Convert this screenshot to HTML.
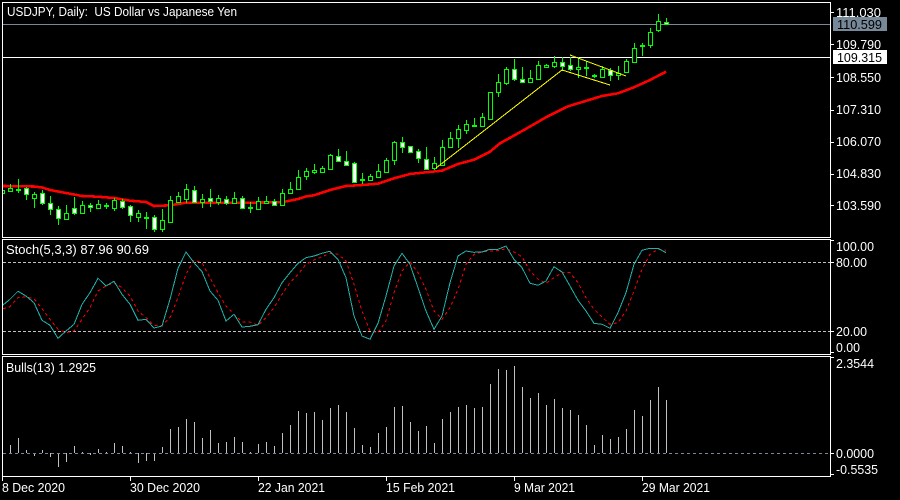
<!DOCTYPE html>
<html><head><meta charset="utf-8"><style>
html,body{margin:0;padding:0;background:#000;width:900px;height:500px;overflow:hidden}
svg{display:block}
text{font-family:"Liberation Sans",sans-serif;font-size:13px;fill:#fff}
.c{shape-rendering:crispEdges}
</style></head><body>
<svg width="900" height="500" viewBox="0 0 900 500" xmlns="http://www.w3.org/2000/svg">
<rect width="900" height="500" fill="#000"/>
<!-- horizontal price lines -->
<g class="c" fill="none" stroke-width="1">
<path d="M3 24.500H830" stroke="#778899"/>
<path d="M3 57.500H830" stroke="#fff"/>
</g>
<!-- MA -->
<polyline class="c" fill="none" stroke="#f00" stroke-width="2.6" points="3,186 34,186.500 42,187.500 50,190 66,193 82,196 98,196.700 114,198 130,200.700 146,202 154,206 170,205.300 186,202.700 242,202.700 282,202.300 298,199 306,196.500 314,195.300 330,190 346,186 362,185 378,183.700 394,178.300 410,174 426,172.300 442,170.700 458,164 474,159.700 490,151.700 500,143.300 524,130 547,116.700 567,106.700 578,103.300 602,96 618,93.300 634,87.300 650,80 666,71.700"/>
<!-- wicks -->
<path class="c" fill="none" stroke="#0f0" d="M10.500 184V192M18.500 179V193M26.500 187V200M34.500 192V208M42.500 190V205M50.500 196V215M58.500 206V225M66.500 205V220M74.500 197V215M82.500 201V213M90.500 203V212M98.500 200V208M106.500 203V209M114.500 198V211M122.500 199V209M130.500 205V222M138.500 210V222M146.500 212V229M154.500 215V232M162.500 209V232M170.500 196V223M178.500 192V203M186.500 184V203M194.500 186V203M202.500 194V208M210.500 189V207M218.500 195V205M226.500 196V205M234.500 192V204M242.500 196V209M250.500 202V213M258.500 197V209M266.500 196V203M274.500 199V206M282.500 189V206M290.500 182V193M298.500 170V190M306.500 168V180M314.500 164V174M322.500 166V172M330.500 154V170M338.500 149V161M346.500 151V165M354.500 162V183M362.500 173V184M370.500 174V181M378.500 164V177M386.500 158V172M394.500 141V165M402.500 137V153M410.500 146V153M418.500 149V163M426.500 147V169M434.500 157V170M442.500 140V165M450.500 132V148M458.500 125V148M466.500 120V134M474.500 118V127M482.500 113V126M490.500 92V119M498.500 74V97M506.500 67V85M514.500 59V81M522.500 67V83M530.500 70V82M538.500 61V79M546.500 64V67M554.500 56V68M562.500 57V71M570.500 57V71M578.500 57V78M586.500 61V76M594.500 74V78M602.500 66V78M610.500 68V81M618.500 66V80M626.500 59V73M634.500 43V63M642.500 43V56M650.500 28V48M658.500 14V32M666.500 18V25"/>
<!-- hollow bodies -->
<path class="c" fill="#000" stroke="#0f0" d="M2.500 190.500h2v3h-2zM8.500 188.500h4v3h-4zM16.500 189.500h4v1h-4zM32.500 194.500h4v4h-4zM64.500 213.500h4v6h-4zM80.500 205.500h4v8h-4zM96.500 204.500h4v4h-4zM104.500 205.500h4v1h-4zM112.500 200.500h4v8h-4zM136.500 213.500h4v4h-4zM144.500 217.500h4v1h-4zM160.500 220.500h4v9h-4zM168.500 200.500h4v22h-4zM176.500 196.500h4v6h-4zM184.500 189.500h4v10h-4zM200.500 199.500h4v3h-4zM216.500 198.500h4v4h-4zM232.500 198.500h4v5h-4zM248.500 207.500h4v1h-4zM256.500 201.500h4v8h-4zM264.500 201.500h4v2h-4zM280.500 193.500h4v12h-4zM288.500 189.500h4v4h-4zM296.500 177.500h4v12h-4zM304.500 171.500h4v5h-4zM312.500 170.500h4v2h-4zM320.500 168.500h4v4h-4zM328.500 155.500h4v14h-4zM360.500 179.500h4v1h-4zM368.500 176.500h4v4h-4zM376.500 171.500h4v6h-4zM384.500 160.500h4v12h-4zM392.500 142.500h4v18h-4zM432.500 163.500h4v5h-4zM440.500 147.500h4v18h-4zM448.500 138.500h4v9h-4zM456.500 129.500h4v9h-4zM464.500 124.500h4v6h-4zM472.500 125.500h4v1h-4zM480.500 117.500h4v9h-4zM488.500 92.500h4v27h-4zM496.500 82.500h4v10h-4zM504.500 69.500h4v14h-4zM528.500 78.500h4v4h-4zM536.500 65.500h4v14h-4zM544.500 65.500h4v2h-4zM552.500 62.500h4v4h-4zM576.500 67.500h4v2h-4zM584.500 67.500h4v1h-4zM592.500 75.500h4v1h-4zM600.500 69.500h4v8h-4zM616.500 73.500h4v2h-4zM624.500 61.500h4v11h-4zM632.500 48.500h4v14h-4zM640.500 45.500h4v1h-4zM648.500 32.500h4v13h-4zM656.500 21.500h4v9h-4z"/>
<!-- bear bodies -->
<path class="c" fill="#fff" stroke="#0f0" d="M24.500 188.500h4v6h-4zM40.500 193.500h4v10h-4zM48.500 203.500h4v6h-4zM56.500 209.500h4v9h-4zM72.500 208.500h4v5h-4zM88.500 205.500h4v2h-4zM120.500 201.500h4v6h-4zM128.500 206.500h4v9h-4zM152.500 217.500h4v12h-4zM192.500 190.500h4v12h-4zM208.500 198.500h4v3h-4zM224.500 199.500h4v4h-4zM240.500 198.500h4v10h-4zM272.500 201.500h4v4h-4zM336.500 156.500h4v5h-4zM344.500 161.500h4v4h-4zM352.500 163.500h4v19h-4zM400.500 142.500h4v5h-4zM408.500 146.500h4v6h-4zM416.500 151.500h4v7h-4zM424.500 159.500h4v10h-4zM512.500 69.500h4v10h-4zM520.500 79.500h4v3h-4zM560.500 62.500h4v4h-4zM568.500 65.500h4v4h-4zM608.500 70.500h4v5h-4zM664.500 22.500h4v2h-4z"/>
<!-- trendlines -->
<g class="c" fill="none" stroke="#ff0" stroke-width="1">
<path d="M436 168L562 70L610 85"/>
<path d="M570 55L626 76"/>
</g>
<!-- stochastic levels -->
<g class="c" fill="none" stroke="#c0c0c0" stroke-dasharray="3 2">
<path d="M3 262.500H830"/><path d="M3 331.500H830"/>
</g>
<polyline class="c" fill="none" stroke="#f00" stroke-dasharray="3 3" points="3,308.700 10,306.700 18,297.700 26,297 34,298.700 42,308.700 50,319.300 58,329.300 66,332.700 74,331 82,319.300 90,307.700 98,291 106,286 114,282.700 122,287.700 130,296 138,311 146,317.700 154,325.300 162,325.300 170,317.700 178,297.700 186,274.300 194,260.300 202,262.700 210,277.700 218,292.700 226,306 234,314.300 242,322 250,322 258,325.300 266,317.700 274,307.700 282,294.300 290,282.700 298,274.300 306,264.300 314,260 322,256.700 330,253.300 338,254.300 346,261 354,284.300 362,311 370,331 378,332.700 386,321 394,292.700 402,271 410,262 418,272.700 426,289.300 434,311 442,319.300 450,307.700 458,289.300 466,264.300 474,254.300 482,252 490,251 498,250.700 506,248.700 514,252 522,256.700 530,271 538,279.300 546,283.300 554,277.700 562,272.700 570,272.700 578,282.700 586,297.700 594,309.300 602,317 610,324.300 618,322.700 626,311 634,291 642,269.300 650,254.300 658,249.300 666,250.300"/>
<polyline class="c" fill="none" stroke="#20b2aa" points="3,305 10,299.300 18,291.300 26,296 34,302.700 42,320.300 50,325.300 58,338.300 66,331 74,324.300 82,304.300 90,292.700 98,278.300 106,286 114,281.300 122,294.300 130,304.300 138,320.300 146,319.300 154,328 162,326 170,299.300 178,268.300 186,252 194,262.700 202,271.700 210,291 218,300.300 226,321 234,314.300 242,327 250,326.300 258,324.700 266,309.300 274,297.700 282,282.700 290,272.700 298,263.300 306,257.700 314,256 322,253.300 330,251.300 338,259.300 346,277.700 354,316 362,336 370,339.300 378,323.300 386,296 394,266 402,253.300 410,264.300 418,287.700 426,311 434,329.300 442,316 450,282.700 458,256 466,251 474,252.300 482,252 490,249.300 498,249.300 506,246 514,259.300 522,267.700 530,283.300 538,285.300 546,281 554,266.700 562,272 570,286 578,300.300 586,311 594,323.300 602,324.300 610,328.300 618,312.700 626,292.700 634,264.300 642,250.300 650,248.300 658,248.300 666,252.700"/>
<!-- bulls -->
<path class="c" fill="none" stroke="#c0c0c0" d="M10.500 445V453M18.500 438V453M26.500 450V453M34.500 453V456M42.500 450V453M50.500 453V457M58.500 453V467M66.500 453V462M74.500 446V453M82.500 452V453M90.500 453V455M98.500 449V453M106.500 452V453M114.500 443V453M122.500 446V453M130.500 452V453M138.500 453V463M146.500 453V461M154.500 453V461M162.500 447V453M170.500 429V453M178.500 427V453M186.500 419V453M194.500 422V453M202.500 438V453M210.500 430V453M218.500 443V453M226.500 442V453M234.500 437V453M242.500 442V453M250.500 452V453M258.500 444V453M266.500 442V453M274.500 446V453M282.500 433V453M290.500 425V453M298.500 411V453M306.500 413V453M314.500 412V453M322.500 420V453M330.500 408V453M338.500 405V453M346.500 412V453M354.500 428V453M362.500 445V453M370.500 447V453M378.500 433V453M386.500 427V453M394.500 407V453M402.500 406V453M410.500 422V453M418.500 431V453M426.500 426V453M434.500 443V453M442.500 419V453M450.500 412V453M458.500 407V453M466.500 405V453M474.500 408V453M482.500 407V453M490.500 384V453M498.500 369V453M506.500 370V453M514.500 366V453M522.500 387V453M530.500 398V453M538.500 393V453M546.500 405V453M554.500 399V453M562.500 408V453M570.500 410V453M578.500 415V453M586.500 425V453M594.500 445V453M602.500 435V453M610.500 439V453M618.500 437V453M626.500 429V453M634.500 410V453M642.500 416V453M650.500 400V453M658.500 387V453M666.500 400V453"/>
<path class="c" fill="none" stroke="#778899" stroke-dasharray="3 3" d="M3 453.500H830"/>
<!-- frames -->
<g class="c" fill="none" stroke="#fff">
<path d="M2.500 2.500H830.500V237.500H2.500Z"/>
<path d="M2.500 239.500H830.500V354.500H2.500Z"/>
<path d="M2.500 356.500H830.500V476.500H2.500Z"/>
<path d="M831 12.500h3M831 44.500h3M831 77.500h3M831 110.500h3M831 142.500h3M831 174.500h3M831 205.500h3M831 240.500h3M831 262.500h3M831 331.500h3M831 352.500h3M831 357.500h3M831 453.500h3M831 474.500h3"/>
<path d="M2.500 477V481M130.500 477V481M258.500 477V481M386.500 477V481M514.500 477V481M642.500 477V481"/>
</g>
<!-- price boxes -->
<rect x="833" y="17" width="54" height="14" fill="#778899"/>
<rect x="833" y="50" width="54" height="14" fill="#fff"/>
<!-- text -->
<text x="7" y="16" textLength="230" lengthAdjust="spacingAndGlyphs" xml:space="preserve">USDJPY, Daily:  US Dollar vs Japanese Yen</text>
<text x="6" y="254" textLength="143" lengthAdjust="spacingAndGlyphs">Stoch(5,3,3) 87.96 90.69</text>
<text x="6" y="372" textLength="90" lengthAdjust="spacingAndGlyphs">Bulls(13) 1.2925</text>
<text x="836" y="17" textLength="45" lengthAdjust="spacingAndGlyphs">111.030</text>
<text x="837" y="29" textLength="45" lengthAdjust="spacingAndGlyphs" style="fill:#000">110.599</text>
<text x="836" y="49" textLength="45" lengthAdjust="spacingAndGlyphs">109.790</text>
<text x="837" y="62" textLength="45" lengthAdjust="spacingAndGlyphs" style="fill:#000">109.315</text>
<text x="836" y="82" textLength="45" lengthAdjust="spacingAndGlyphs">108.550</text>
<text x="836" y="114" textLength="45" lengthAdjust="spacingAndGlyphs">107.310</text>
<text x="836" y="146" textLength="45" lengthAdjust="spacingAndGlyphs">106.070</text>
<text x="836" y="178" textLength="45" lengthAdjust="spacingAndGlyphs">104.830</text>
<text x="836" y="210" textLength="45" lengthAdjust="spacingAndGlyphs">103.590</text>
<text x="836" y="251" textLength="38" lengthAdjust="spacingAndGlyphs">100.00</text>
<text x="836" y="267" textLength="31" lengthAdjust="spacingAndGlyphs">80.00</text>
<text x="836" y="336" textLength="31" lengthAdjust="spacingAndGlyphs">20.00</text>
<text x="836" y="352" textLength="24" lengthAdjust="spacingAndGlyphs">0.00</text>
<text x="836" y="368" textLength="38" lengthAdjust="spacingAndGlyphs">2.3544</text>
<text x="836" y="458" textLength="38" lengthAdjust="spacingAndGlyphs">0.0000</text>
<text x="836" y="474" textLength="42" lengthAdjust="spacingAndGlyphs">-0.5535</text>
<text x="2" y="492" textLength="63" lengthAdjust="spacingAndGlyphs">8 Dec 2020</text>
<text x="130" y="492" textLength="70" lengthAdjust="spacingAndGlyphs">30 Dec 2020</text>
<text x="258" y="492" textLength="67" lengthAdjust="spacingAndGlyphs">22 Jan 2021</text>
<text x="386" y="492" textLength="69" lengthAdjust="spacingAndGlyphs">15 Feb 2021</text>
<text x="514" y="492" textLength="61" lengthAdjust="spacingAndGlyphs">9 Mar 2021</text>
<text x="642" y="492" textLength="68" lengthAdjust="spacingAndGlyphs">29 Mar 2021</text>
</svg>
</body></html>
